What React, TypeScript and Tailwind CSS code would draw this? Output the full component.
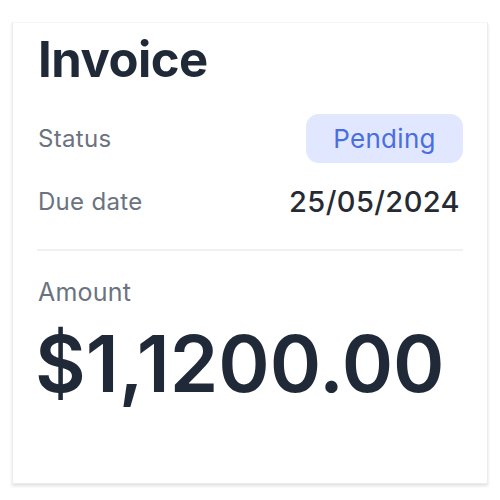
import React from "react";

export default function App() {
  return (
    <div className="w-[500px] h-[500px] bg-white px-[12px] pt-[22px] pb-[16px]" style={{ fontFamily: "Inter, 'Noto Sans', sans-serif" }}>
      <div className="h-[462px] w-[476px] border border-[#ececec] border-t-[#f7f7f7] bg-white shadow-[0_2px_3px_rgba(0,0,0,0.12)] px-[24px] pt-[7px]">
        <h1 className="ml-[1px] text-[49px] leading-[60px] font-bold text-[#1f2937] tracking-[-0.5px]">Invoice</h1>
        <div className="mt-[24px] flex items-center justify-between">
          <span className="ml-[1px] text-[24px] leading-[30px] tracking-[0.3px] text-[#6b7280]">Status</span>
          <span className="h-[49px] w-[157px] rounded-[13px] bg-[#e0e7ff] text-[#4a6ee0] text-[26px] tracking-[0.3px] flex items-center justify-center">Pending</span>
        </div>
        <div className="mt-[19px] h-[40px] flex items-center justify-between">
          <span className="ml-[1px] text-[24px] leading-[30px] tracking-[0.3px] text-[#6b7280]">Due date</span>
          <span className="text-[29px] leading-[34px] font-medium tracking-[0.4px] text-[#262b33] mr-[3px]">25/05/2024</span>
        </div>
        <div className="mt-[27px] h-[2px] bg-[#eef0f3]" />
        <div className="ml-[1px] mt-[26px] text-[25px] text-[#6b7280] leading-[30px] tracking-[0.2px]">Amount</div>
        <div className="-ml-[2px] mt-[12px] text-[78px] leading-[90px] font-semibold text-[#1f2937]">$1,1200.00</div>
      </div>
    </div>
  );
}
